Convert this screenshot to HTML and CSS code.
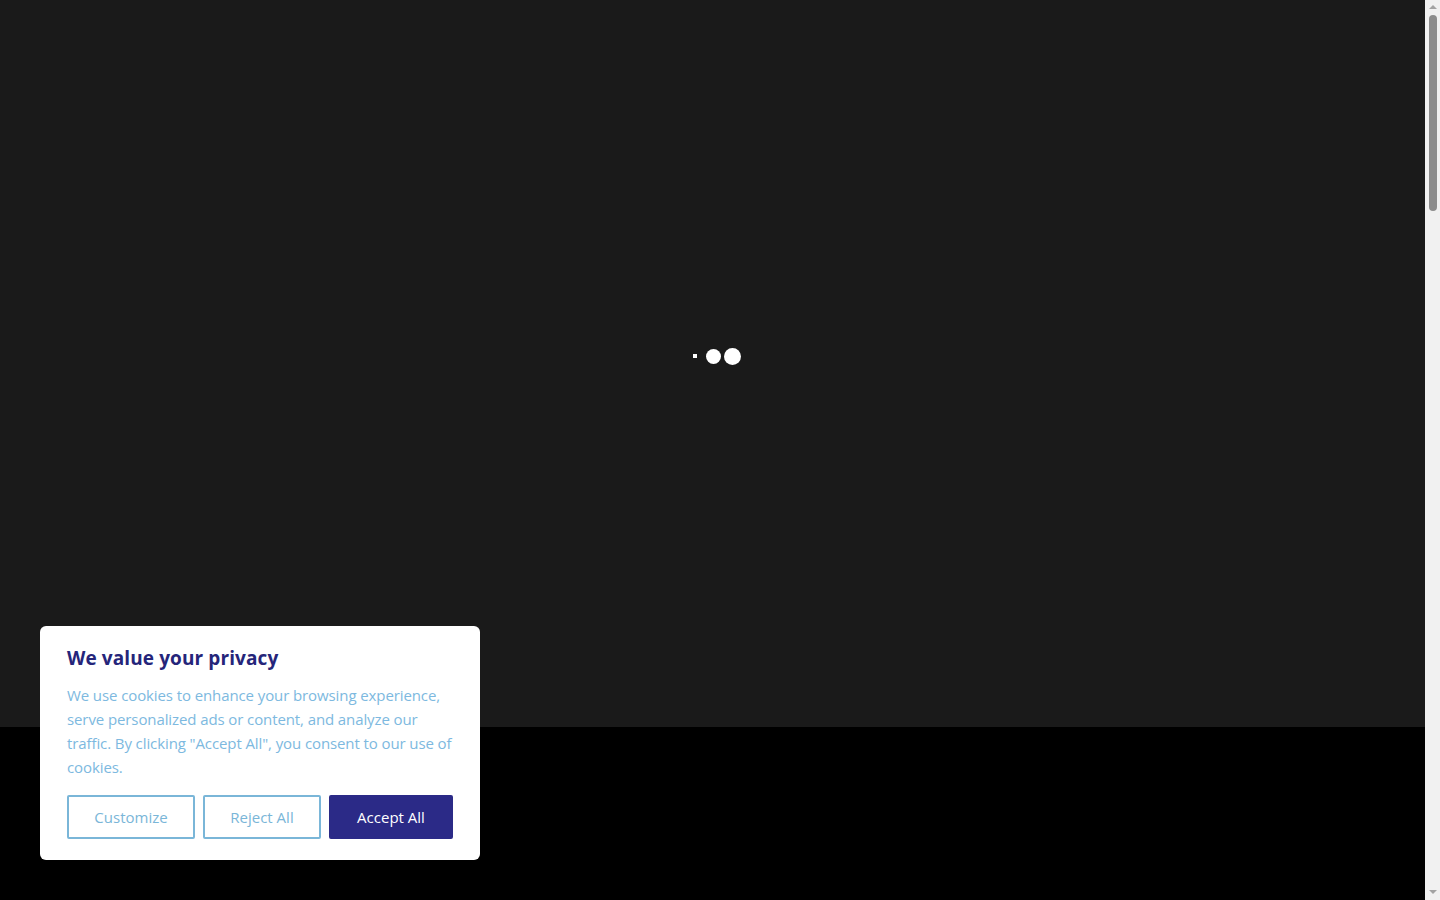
FILE: index.html
```html
<!DOCTYPE html>
<html lang="en">
<head>
<meta charset="utf-8">
<title>Loading</title>
<link rel="stylesheet" href="styles.css">
</head>
<body>
<div class="page">
  <section class="hero">
    <div class="loader">
      <span class="dot dot-sm"></span>
      <span class="dot dot-md"></span>
      <span class="dot dot-lg"></span>
    </div>
  </section>
  <section class="rest"></section>
</div>
<div class="scrollbar" aria-hidden="true">
  <span class="sb-arrow sb-up"></span>
  <span class="sb-track"><span class="sb-thumb"></span></span>
  <span class="sb-arrow sb-down"></span>
</div>
<div class="cookie">
  <h2 class="cookie-title">We value your privacy</h2>
  <p class="cookie-text">We use cookies to enhance your browsing experience, serve personalized ads or content, and analyze our traffic. By clicking "Accept All", you consent to our use of cookies.</p>
  <div class="cookie-actions">
    <button class="btn btn-outline btn-customize">Customize</button>
    <button class="btn btn-outline btn-reject">Reject All</button>
    <button class="btn btn-solid btn-accept">Accept All</button>
  </div>
</div>
</body>
</html>
```
FILE: styles.css
```css
html, body {
  margin: 0;
  padding: 0;
}
body {
  background: #000;
  font-family: "Open Sans", "Liberation Sans", sans-serif;
}
.page {
  display: flex;
  flex-direction: column;
  width: calc(100% - 15px);
}
.hero {
  height: 727px;
  background: #1a1a1a;
  display: flex;
  align-items: center;
  justify-content: center;
}
.loader {
  display: flex;
  align-items: center;
  gap: 3px;
  margin-top: -15px;
  margin-left: 8px;
}
.dot {
  display: block;
  background: #fff;
  border-radius: 50%;
}
.dot-sm {
  width: 4px;
  height: 4px;
  border-radius: 0;
  margin-right: 6px;
}
.dot-md {
  width: 15px;
  height: 15px;
}
.dot-lg {
  width: 17px;
  height: 17px;
}
.rest {
  height: 3300px;
  background: #000;
}

/* fake browser scrollbar */
.scrollbar {
  position: fixed;
  top: 0;
  right: 0;
  width: 15px;
  height: 100vh;
  background: #f1f1f1;
  display: flex;
  flex-direction: column;
  align-items: center;
}
.sb-arrow {
  display: block;
  width: 0;
  height: 0;
  border-left: 4px solid transparent;
  border-right: 4px solid transparent;
  flex: none;
}
.sb-up {
  border-bottom: 4px solid #a3a3a3;
  margin: 5px 0 6px;
}
.sb-down {
  border-top: 4px solid #a3a3a3;
  margin: 6px 0 6px;
}
.sb-track {
  flex: 1;
  width: 100%;
  display: flex;
  justify-content: center;
}
.sb-thumb {
  display: block;
  width: 8px;
  height: 196px;
  background: #8c8c8c;
  border-radius: 4px;
}

/* cookie banner */
.cookie {
  position: fixed;
  left: 40px;
  bottom: 40px;
  width: 440px;
  box-sizing: border-box;
  background: #fff;
  border-radius: 6px;
  padding: 21px 27px 21px;
}
.cookie-title {
  margin: 0 0 14px;
  font-size: 19px;
  line-height: 22px;
  font-weight: 700;
  color: #25257a;
  letter-spacing: 0.1px;
}
.cookie-text {
  margin: 0 0 16px;
  font-size: 15px;
  line-height: 24px;
  color: #7db9e0;
  letter-spacing: -0.1px;
}
.cookie-actions {
  display: flex;
  gap: 8px;
}
.btn {
  height: 44px;
  box-sizing: border-box;
  border-radius: 2px;
  font-family: inherit;
  font-size: 15px;
  font-weight: 500;
  cursor: pointer;
  padding: 0;
}
.btn-outline {
  background: #fff;
  border: 2px solid #7ab6d8;
  color: #7ab6d8;
}
.btn-solid {
  background: #2b2a87;
  border: 2px solid #2b2a87;
  color: #fff;
}
.btn-customize { width: 128px; }
.btn-reject { width: 118px; }
.btn-accept { width: 124px; }
```
